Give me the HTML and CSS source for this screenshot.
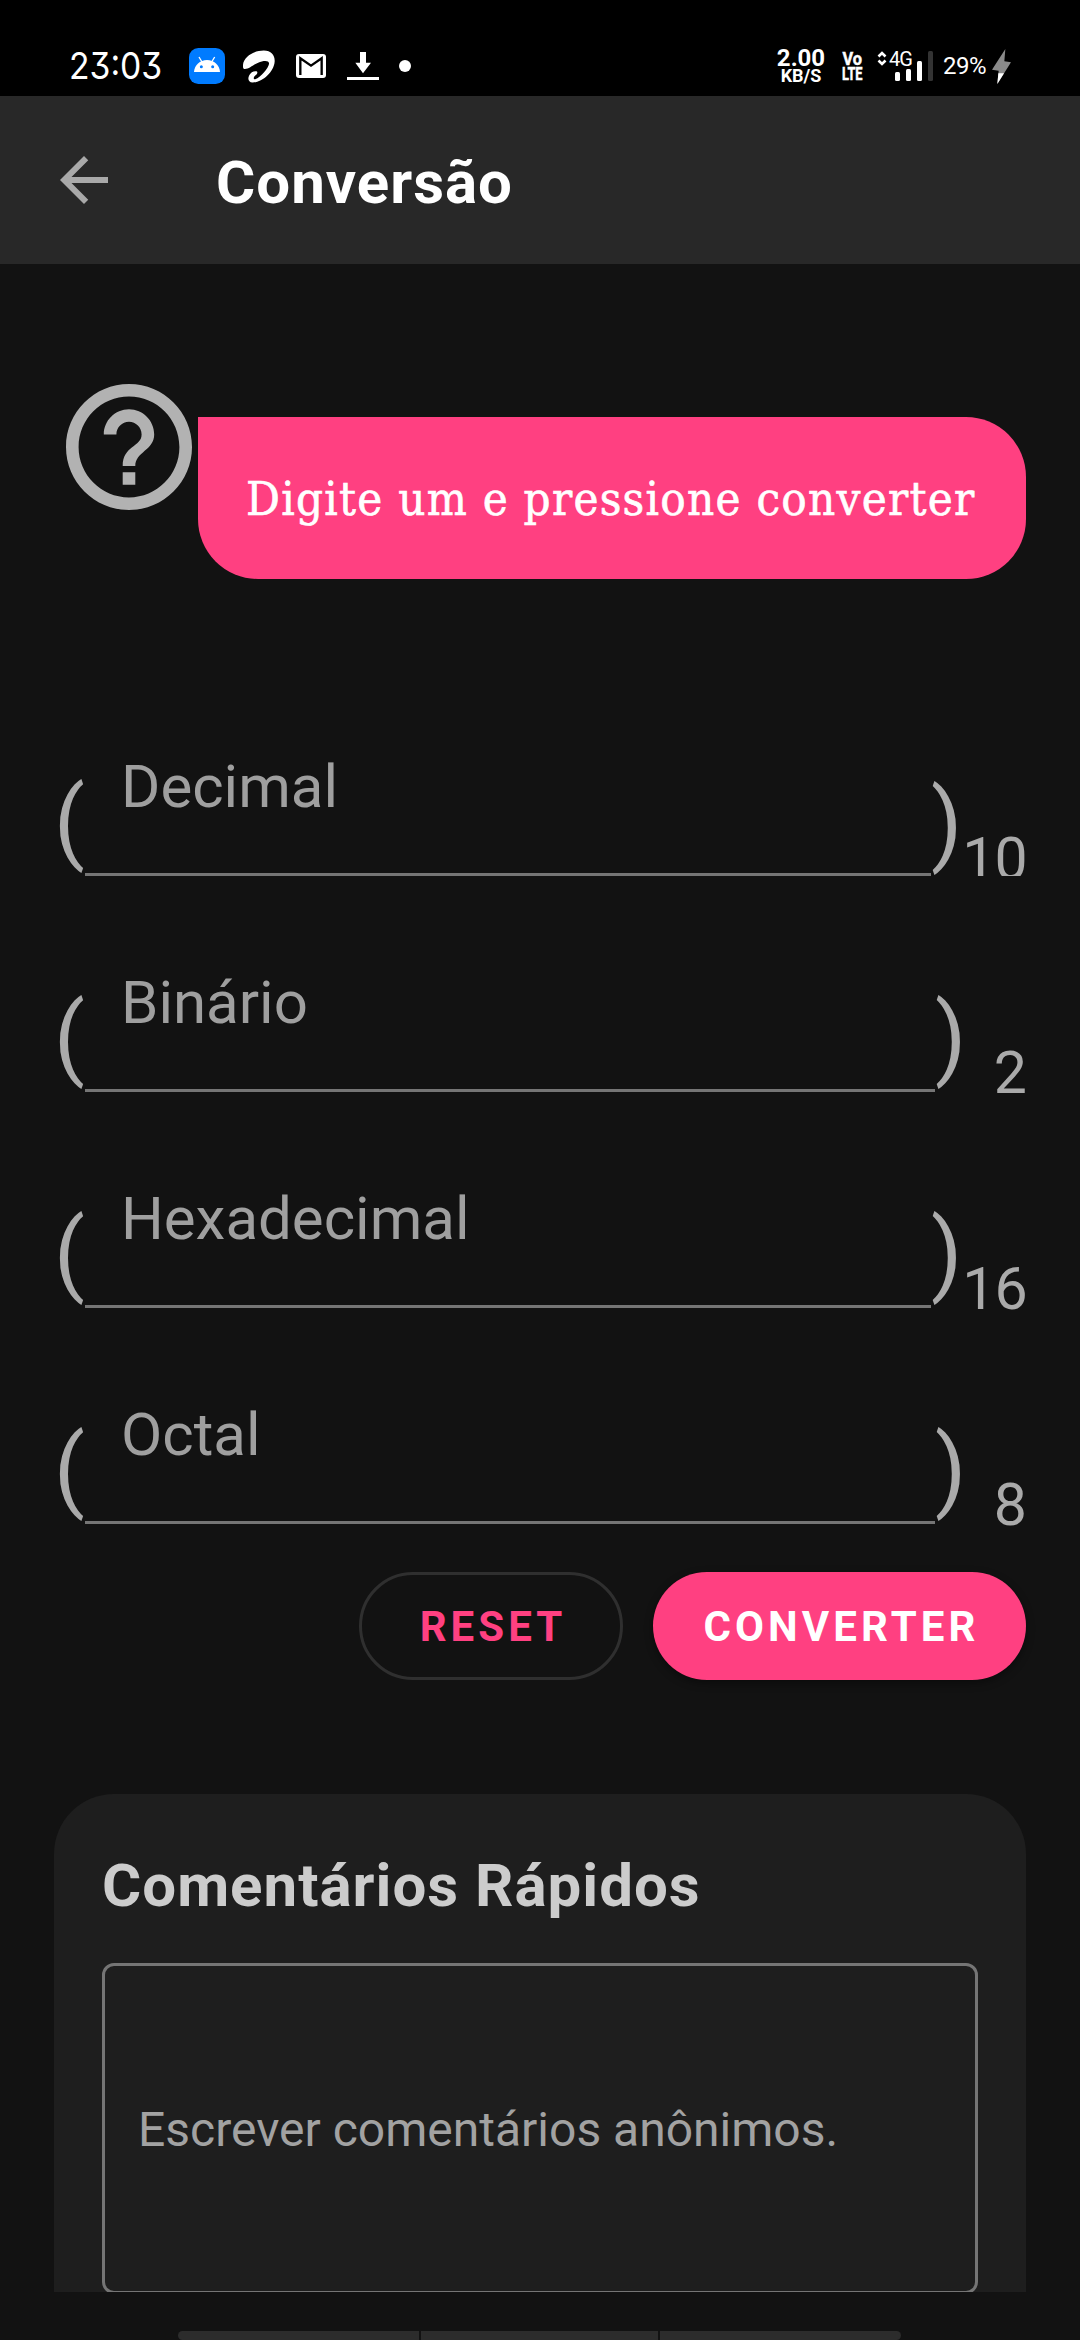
FILE: index.html
```html
<!DOCTYPE html>
<html lang="pt">
<head>
<meta charset="utf-8">
<title>Conversão</title>
<link rel="stylesheet" href="styles.css">
</head>
<body>
<div class="status">
  <span class="clock">23:03</span>
  <svg class="st-android" viewBox="0 0 108 108"><rect width="108" height="108" rx="28" fill="#007bff"/><path d="M15 72C16 52 33 36 54 36S92 52 93 72Z" fill="#fff"/><path d="M30 27L39 42M77 27L68 42" stroke="#fff" stroke-width="4"/><circle cx="37" cy="56" r="4.5" fill="#007bff"/><circle cx="71" cy="56" r="4.5" fill="#007bff"/></svg>
  <svg class="st-swirl" viewBox="609 58 97 99"><path fill="#fff" d="M609 108C607 80 640 59 672 59C695 59 706 74 705 92C703 125 665 156 638 156C626 156 622 145 628 134C632 125 642 120 650 122C655 124 652 130 647 134C640 140 640 147 646 146C664 140 686 112 688 99C688 88 670 90 655 96C640 102 627 115 615 115C611 115 609 112 609 108Z"/></svg>
  <svg class="st-mail" viewBox="768 72 90 72"><rect x="768" y="72" width="90" height="72" rx="9" fill="#fff"/><path d="M781 135V85L813 107L845 85V135" fill="none" stroke="#000" stroke-width="7"/></svg>
  <svg class="st-down" viewBox="921 66 96 84"><path fill="#fff" d="M960 66h18v32h15l-24 32l-23-32h14zM921 141h96v9h-96z"/></svg>
  <span class="st-dot"></span>
  <div class="rate"><span class="rate-n">2.00</span><span class="rate-u">KB/S</span></div>
  <div class="volte"><span>Vo</span><span>LTE</span></div>
  <div class="signal">
    <svg class="bars" viewBox="0 0 56 30"><path d="M1.500 5.500L5 2L8.500 5.500M1.500 9.500L5 13L8.500 9.500" fill="none" stroke="#fff" stroke-width="2.600"/><g fill="#fff"><rect x="18" y="21" width="5" height="9" rx="1.500"/><rect x="29" y="18" width="5" height="12" rx="1.500"/><rect x="40" y="10" width="5" height="20" rx="1.500"/></g><rect x="51" y="0" width="5" height="30" rx="1.500" fill="#333"/></svg>
    <span class="net">4G</span>
  </div>
  <span class="pct">29%</span>
  <svg class="bolt" viewBox="756 56 57 105"><path fill="#8a8a8a" d="M796 56L756 118L776 121L772 161L813 96L793 93Z"/><path fill="#fff" d="M775 129H792L772 161Z"/></svg>
</div>
<header class="appbar">
  <svg class="back" viewBox="4 4 16 16"><path fill="#a9a9a9" d="M20 11H7.830l5.590-5.590L12 4l-8 8 8 8 1.410-1.410L7.830 13H20v-2z"/></svg>
  <h1>Conversão</h1>
</header>
<main>
  <section class="hint">
    <svg class="help" viewBox="2 2 20 20"><path fill="#b2b2b2" d="M11 18h2v-2h-2v2zm1-16C6.480 2 2 6.480 2 12s4.480 10 10 10 10-4.480 10-10S17.520 2 12 2zm0 18c-4.410 0-8-3.590-8-8s3.590-8 8-8 8 3.590 8 8-3.590 8-8 8zm0-14c-2.210 0-4 1.790-4 4h2c0-1.100.9-2 2-2s2 .9 2 2c0 2-3 1.750-3 5h2c0-2.250 3-2.500 3-5 0-2.210-1.790-4-4-4z"/></svg>
    <div class="bubble"><span>Digite um e pressione converter</span></div>
  </section>
  <section class="fields">
    <div class="row wide clipped"><span class="paren">(</span><label class="input">Decimal</label><span class="paren close">)</span><span class="base">10</span></div>
    <div class="row"><span class="paren">(</span><label class="input">Binário</label><span class="paren">)</span><span class="base">2</span></div>
    <div class="row wide"><span class="paren">(</span><label class="input">Hexadecimal</label><span class="paren">)</span><span class="base">16</span></div>
    <div class="row"><span class="paren">(</span><label class="input">Octal</label><span class="paren">)</span><span class="base">8</span></div>
  </section>
  <section class="actions">
    <button class="btn reset">RESET</button>
    <button class="btn convert">CONVERTER</button>
  </section>
  <section class="card">
    <h2>Comentários Rápidos</h2>
    <div class="comment">Escrever comentários anônimos.</div>
  </section>
</main>
<footer class="strip"><i></i><i></i><i></i></footer>
</body>
</html>
```
FILE: styles.css
```css
* { box-sizing: border-box; }
body {
  margin: 0;
  width: 1080px;
  height: 2340px;
  overflow: hidden;
  background: #121212;
  font-family: Roboto, "Liberation Sans", sans-serif;
  color: #aaa;
  white-space: nowrap;
}
svg { display: block; flex: none; }
h1, h2 { margin: 0; letter-spacing: 1px; }

.status {
  display: flex;
  align-items: center;
  height: 96px;
  padding: 36px 0 0 69px;
  background: #000;
  color: #fff;
}
.clock {
  flex: 0 0 120px;
  font: 400 37px/44px Inter, sans-serif;
  font-feature-settings: "cv09";
  transform: scaleX(.91);
  transform-origin: left;
}
.st-android { width: 36px; height: 36px; }
.st-swirl { width: 32px; height: 33px; margin-left: 18px; }
.st-mail { width: 30px; height: 24px; margin-left: 21px; }
.st-down { width: 32px; height: 28px; margin-left: 21px; }
.st-dot { width: 12px; height: 12px; margin-left: 20px; border-radius: 50%; background: #fff; }
.rate {
  display: flex;
  flex-direction: column;
  align-items: center;
  width: 50px;
  margin-left: 365px;
  font-weight: 700;
}
.rate-n { font-size: 24px; line-height: 20px; }
.rate-u { font-size: 18px; line-height: 16px; }
.volte {
  display: flex;
  flex-direction: column;
  align-items: center;
  width: 22px;
  margin-left: 15px;
  font-weight: 700;
  font-size: 19px;
  line-height: 15px;
  transform: scaleX(.68);
}
.volte { transform: scaleX(.66); -webkit-text-stroke: .5px #fff; }
.volte span { transform: scaleX(1.02); }
.volte span:first-child { transform: scaleX(1.3); }
.signal { position: relative; width: 56px; height: 30px; margin-left: 14px; }
.bars { width: 56px; height: 30px; }
.net { position: absolute; left: 12px; top: -2px; font-size: 20px; line-height: 20px; letter-spacing: -1px; }
.pct { width: 47px; margin-left: 10px; font-size: 24px; line-height: 28px; letter-spacing: -.5px; }
.bolt { width: 19px; height: 35px; margin-left: 2px; }

.appbar {
  display: flex;
  align-items: center;
  height: 168px;
  padding-left: 60px;
  background: #282828;
}
.back { width: 48px; height: 48px; }
h1 {
  margin-left: 108px;
  padding-top: 5px;
  color: #fff;
  font-size: 60px;
  line-height: 72px;
}

main { height: 2028px; overflow: hidden; padding: 120px 54px 0; }
.hint { display: flex; gap: 6px; height: 195px; padding-left: 12px; }
.help { width: 126px; height: 126px; }
.bubble {
  display: flex;
  align-items: center;
  width: 828px;
  height: 162px;
  margin-top: 33px;
  padding: 0 0 0 48px;
  border-radius: 0 60px 60px 60px;
  background: #ff4081;
  color: #fff;
  font-family: "Roboto Slab", "DejaVu Serif", serif;
  font-size: 47px;
  font-stretch: condensed;
  letter-spacing: 1.250px;
  -webkit-text-stroke: .6px #fff;
}

.fields { padding-top: 81px; }
.row { display: flex; align-items: flex-end; height: 216px; }
.clipped { overflow: hidden; }
.paren { flex: 0 0 31px; height: 99px; font-size: 90px; line-height: 90px; }
.close { height: 97px; }
.input {
  flex: 0 0 850px;
  height: 117px;
  padding-left: 36px;
  border-bottom: 3px solid #757575;
  color: #9f9f9f;
  font-size: 60px;
  line-height: 56px;
}
.wide .input { flex-basis: 846px; }
.base { flex: 1; height: 46px; margin-right: -1px; text-align: right; font-size: 59px; line-height: 54px; }
.wide .base { margin-right: 0; letter-spacing: -1px; }
.clipped .base { height: 44px; }

.actions { display: flex; justify-content: flex-end; gap: 30px; margin-top: 48px; }
.btn {
  height: 108px;
  border: 0;
  padding: 2px 0 0 4px;
  border-radius: 54px;
  font: 700 42px/106px Roboto, "Liberation Sans", sans-serif;
  letter-spacing: 4.050px;
}
.reset { width: 264px; border: 3px solid #2f2f2f; background: none; color: #ff4081; line-height: 100px; }
.convert { width: 373px; background: #ff4081; color: #fff; box-shadow: 0 3px 8px rgba(0, 0, 0, .4); }

.card {
  height: 560px;
  margin-top: 114px;
  padding: 48px;
  border-radius: 60px;
  background: #1e1e1e;
}
h2 { color: #ccc; font-size: 60px; line-height: 88px; height: 121px; }
.comment {
  height: 331px;
  padding-left: 33px;
  border: 3px solid #757575;
  border-radius: 12px;
  color: #a2a2a2;
  font-size: 48px;
  line-height: 328px;
}

.strip { display: flex; gap: 2px; padding: 39px 0 0 178px; }
.strip i { width: 241px; height: 9px; background: #2c2c2c; border-radius: 5px 0 0 5px; }
.strip i + i { width: 237px; border-radius: 0; }
.strip i:last-child { width: 241px; border-radius: 0 5px 5px 0; }
```
